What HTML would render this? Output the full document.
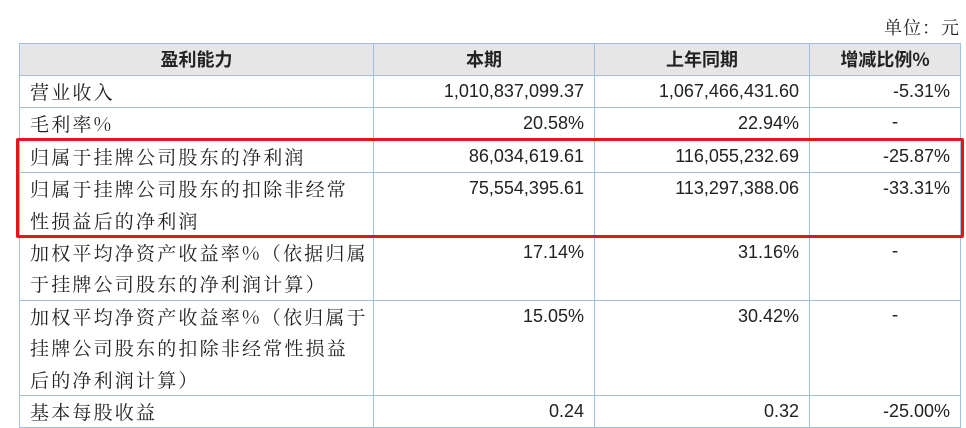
<!DOCTYPE html><html><head><meta charset="utf-8"><style>
body{margin:0;width:966px;height:426px;background:#fff;position:relative;overflow:hidden;font-family:"Liberation Sans","Noto Sans CJK SC",sans-serif;color:#222}
.unit{position:absolute;right:6px;top:14px;font-size:18px;letter-spacing:1px;font-family:"Noto Serif CJK SC",serif}
table{position:absolute;left:19px;top:43px;border-collapse:collapse;table-layout:fixed}
td{border:1.5px solid #9dc0e4;padding:0 10px;font-size:19px;line-height:30.5px;vertical-align:top;height:30.5px}
td.l{font-family:"Noto Serif CJK SC",serif;letter-spacing:2.2px;padding-left:10px;padding-right:4px;line-height:31.4px}
td.n{text-align:right;font-size:18px}
tr.h td{background:#e6e6e6;text-align:center;font-weight:bold;font-family:"Noto Sans CJK SC",sans-serif;height:31px;line-height:31px;font-size:18px}
td.c{text-align:center;padding-left:30px}
.red{position:absolute;left:16px;top:138px;width:942px;height:94px;border:3px solid #e4161b;border-radius:2px}
</style></head><body>
<div class="unit">单位：元</div>
<table>
<colgroup><col style="width:354px"><col style="width:221px"><col style="width:215px"><col style="width:151px"></colgroup>
<tr class="h"><td>盈利能力</td><td>本期</td><td>上年同期</td><td>增减比例%</td></tr>
<tr><td class="l">营业收入</td><td class="n">1,010,837,099.37</td><td class="n">1,067,466,431.60</td><td class="n">-5.31%</td></tr>
<tr><td class="l">毛利率%</td><td class="n">20.58%</td><td class="n">22.94%</td><td class="c">-</td></tr>
<tr><td class="l">归属于挂牌公司股东的净利润</td><td class="n">86,034,619.61</td><td class="n">116,055,232.69</td><td class="n">-25.87%</td></tr>
<tr><td class="l">归属于挂牌公司股东的扣除非经常性损益后的净利润</td><td class="n">75,554,395.61</td><td class="n">113,297,388.06</td><td class="n">-33.31%</td></tr>
<tr><td class="l">加权平均净资产收益率%（依据归属于挂牌公司股东的净利润计算）</td><td class="n">17.14%</td><td class="n">31.16%</td><td class="c">-</td></tr>
<tr><td class="l">加权平均净资产收益率%（依归属于挂牌公司股东的扣除非经常性损益后的净利润计算）</td><td class="n">15.05%</td><td class="n">30.42%</td><td class="c">-</td></tr>
<tr><td class="l">基本每股收益</td><td class="n">0.24</td><td class="n">0.32</td><td class="n">-25.00%</td></tr>
</table>
<div class="red"></div>
</body></html>
